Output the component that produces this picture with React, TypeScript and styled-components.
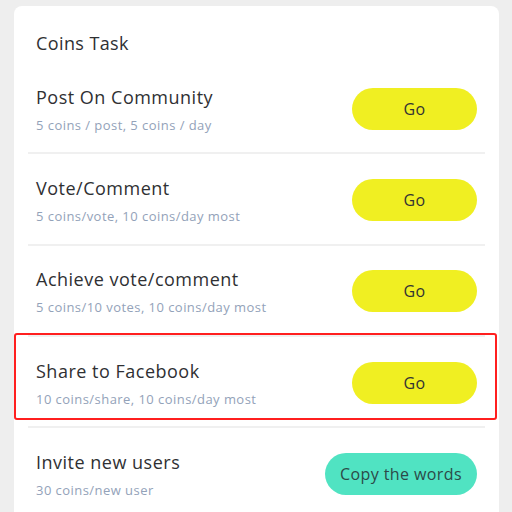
import React from "react";
import styled, { createGlobalStyle } from "styled-components";

const Global = createGlobalStyle`
  html, body { margin: 0; padding: 0; background: #eeeeee; }
  body { font-family: "Open Sans", Lato, sans-serif; -webkit-font-smoothing: antialiased; }
`;

const Page = styled.div`
  padding: 6px 13px 0 14px;
  height: 512px;
  overflow: hidden;
  box-sizing: border-box;
`;

const Card = styled.div`
  background: #ffffff;
  border-radius: 8px;
  padding: 0 14px 40px;
`;

const Header = styled.h2`
  margin: 0;
  height: 57px;
  padding: 0 8px 11px;
  display: flex;
  align-items: flex-end;
  font-size: 18px;
  font-weight: 400;
  letter-spacing: 0.4px;
  color: #2f3033;
  line-height: 1;
  box-sizing: border-box;
`;

const Row = styled.div`
  position: relative;
  height: 89.3px;
  padding: 0 8px;
  display: flex;
  align-items: center;
  justify-content: space-between;
  border-bottom: 2px solid #f0f0f0;
  &:last-child { border-bottom: none; }
`;

const Info = styled.div`
  display: flex;
  flex-direction: column;
  gap: 7px;
  margin-top: 3px;
`;

const Title = styled.div`
  font-size: 18px;
  line-height: 24px;
  letter-spacing: 0.5px;
  color: #2f3033;
`;

const Sub = styled.div`
  font-size: 13px;
  line-height: 18px;
  letter-spacing: 0.45px;
  color: #93a2b9;
`;

const Button = styled.button<{ $variant?: "go" | "copy" }>`
  height: 42px;
  min-width: 125px;
  padding: 0 15px;
  border: none;
  border-radius: 21px;
  margin-top: 2px;
  background: ${(p) => (p.$variant === "copy" ? "#50e3c2" : "#f0ef22")};
  color: ${(p) => (p.$variant === "copy" ? "#2c4a48" : "#333333")};
  font-family: inherit;
  font-size: 16px;
  letter-spacing: 0.4px;
  cursor: pointer;
`;

const Highlight = styled.div`
  position: absolute;
  left: -14px;
  right: -12px;
  top: -4px;
  bottom: 6px;
  border: 2.5px solid #ff1f1f;
  border-radius: 3px;
  pointer-events: none;
`;

const tasks = [
  { title: "Post On Community", sub: "5 coins / post, 5 coins / day", btn: "Go" },
  { title: "Vote/Comment", sub: "5 coins/vote, 10 coins/day most", btn: "Go" },
  { title: "Achieve vote/comment", sub: "5 coins/10 votes, 10 coins/day most", btn: "Go" },
  { title: "Share to Facebook", sub: "10 coins/share, 10 coins/day most", btn: "Go", hl: true },
  { title: "Invite new users", sub: "30 coins/new user", btn: "Copy the words", copy: true },
];

export default function App() {
  return (
    <>
      <Global />
      <Page>
        <Card>
          <Header>Coins Task</Header>
          {tasks.map((t) => (
            <Row key={t.title}>
              {t.hl && <Highlight />}
              <Info>
                <Title>{t.title}</Title>
                <Sub>{t.sub}</Sub>
              </Info>
              <Button $variant={t.copy ? "copy" : "go"}>{t.btn}</Button>
            </Row>
          ))}
        </Card>
      </Page>
    </>
  );
}
